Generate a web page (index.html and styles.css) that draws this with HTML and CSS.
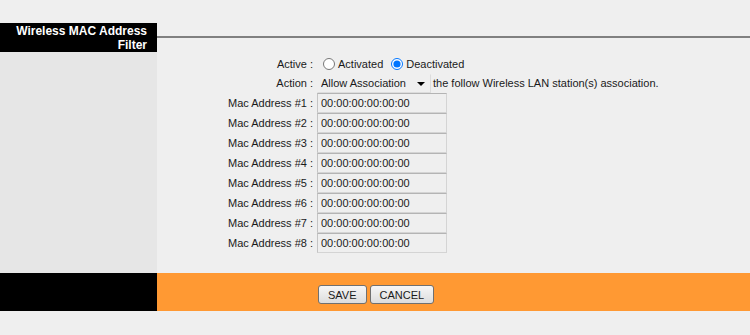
FILE: index.html
```html
<!DOCTYPE html>
<html lang="en">
<head>
    <meta charset="UTF-8">
    <meta name="viewport" content="width=device-width, initial-scale=1.0">
    <title>Wireless MAC Address Filter</title>
    <link rel="stylesheet" href="styles.css">
</head>
<body>
    <div class="head">
        <div class="title">Wireless MAC Address Filter</div>
        <div class="rule"></div>
    </div>

    <div class="main">
        <div class="side"></div>
        <form class="form" action="" method="get">
            <div class="row row-active">
                <label class="lbl">Active :</label>
                <div class="field">
                    <label class="radio"><input type="radio" name="active" value="1">Activated</label>
                    <label class="radio"><input type="radio" name="active" value="0" checked>Deactivated</label>
                </div>
            </div>
            <div class="row row-action">
                <label class="lbl" for="action">Action :</label>
                <div class="field">
                    <div class="select">
                        <select id="action" name="action">
                            <option>Allow Association</option>
                            <option>Deny Association</option>
                        </select>
                    </div>
                    <span class="note">the follow Wireless LAN station(s) association.</span>
                </div>
            </div>
            <div class="row"><label class="lbl" for="mac1">Mac Address #1 :</label><div class="field"><input class="mac" id="mac1" type="text" value="00:00:00:00:00:00"></div></div>
            <div class="row"><label class="lbl" for="mac2">Mac Address #2 :</label><div class="field"><input class="mac" id="mac2" type="text" value="00:00:00:00:00:00"></div></div>
            <div class="row"><label class="lbl" for="mac3">Mac Address #3 :</label><div class="field"><input class="mac" id="mac3" type="text" value="00:00:00:00:00:00"></div></div>
            <div class="row"><label class="lbl" for="mac4">Mac Address #4 :</label><div class="field"><input class="mac" id="mac4" type="text" value="00:00:00:00:00:00"></div></div>
            <div class="row"><label class="lbl" for="mac5">Mac Address #5 :</label><div class="field"><input class="mac" id="mac5" type="text" value="00:00:00:00:00:00"></div></div>
            <div class="row"><label class="lbl" for="mac6">Mac Address #6 :</label><div class="field"><input class="mac" id="mac6" type="text" value="00:00:00:00:00:00"></div></div>
            <div class="row"><label class="lbl" for="mac7">Mac Address #7 :</label><div class="field"><input class="mac" id="mac7" type="text" value="00:00:00:00:00:00"></div></div>
            <div class="row"><label class="lbl" for="mac8">Mac Address #8 :</label><div class="field"><input class="mac" id="mac8" type="text" value="00:00:00:00:00:00"></div></div>
        </form>
    </div>

    <div class="foot">
        <div class="side-dark"></div>
        <div class="bar">
            <button class="btn" type="button">SAVE</button>
            <button class="btn" type="button">CANCEL</button>
        </div>
    </div>
</body>
</html>
```

FILE: styles.css
```css
:root {
    --page: #efefef;
    --side: #e6e6e6;
    --orange: #ff9933;
    --rule: #808080;
    --text: #1a1a1a;
}

body {
    margin: 0;
    padding: 0;
    background: var(--page);
    color: var(--text);
    font-family: "Liberation Sans", Arial, sans-serif;
    font-size: 11px;
}

.head {
    display: flex;
    margin-top: 23px;
}

.title {
    width: 157px;
    box-sizing: border-box;
    height: 29px;
    padding: 1px 10px 0 10px;
    background: #000;
    color: #fff;
    font-weight: bold;
    font-size: 12px;
    line-height: 14px;
    text-align: right;
}

.rule {
    flex: 1;
    height: 2px;
    margin-top: 13px;
    background: var(--rule);
}

.main {
    display: flex;
}

.side {
    width: 157px;
    background: var(--side);
}

.form {
    flex: 1;
    margin: 0;
    padding: 2px 0 20px 0;
}

.row {
    display: flex;
    align-items: center;
    height: 20px;
}

.row-active {
    height: 19px;
}

.lbl {
    width: 156px;
    box-sizing: border-box;
    padding-right: 0;
    text-align: right;
}

.field {
    display: flex;
    align-items: center;
    padding-left: 4px;
}

.radio {
    display: flex;
    align-items: center;
    margin-right: 2px;
}

.radio input {
    width: 12px;
    height: 12px;
    margin: 0 3px 0 6px;
}

.select {
    position: relative;
    width: 114px;
    height: 19px;
}

.select select {
    appearance: none;
    width: 100%;
    height: 19px;
    margin: 0;
    padding: 0 0 0 3px;
    border: 1px solid #dcdcdc;
    border-left-color: #efefef;
    border-top-color: #efefef;
    background: var(--page);
    font-family: inherit;
    font-size: 11px;
    color: var(--text);
}

.select::after {
    content: "";
    position: absolute;
    right: 6px;
    top: 8px;
    border-left: 4px solid transparent;
    border-right: 4px solid transparent;
    border-top: 4px solid #000;
    pointer-events: none;
}

.note {
    margin-left: 2px;
}

.mac {
    width: 130px;
    height: 20px;
    box-sizing: border-box;
    margin: 0;
    padding: 0 3px;
    border: 1px solid #d4d4d4;
    border-top-color: #b4b4b4;
    border-left-color: #c4c4c4;
    background: var(--page);
    font-family: inherit;
    font-size: 11px;
    color: var(--text);
}

.foot {
    display: flex;
    height: 38px;
}

.side-dark {
    width: 157px;
    background: #000;
}

.bar {
    flex: 1;
    display: flex;
    align-items: flex-start;
    gap: 3px;
    padding: 12px 0 0 161px;
    background: var(--orange);
}

.btn {
    height: 19px;
    padding: 0 9px;
    border: 1px solid #707070;
    border-radius: 3px;
    background: linear-gradient(#f6f6f6, #dddddd);
    font-family: inherit;
    font-size: 11px;
    color: var(--text);
}
```
